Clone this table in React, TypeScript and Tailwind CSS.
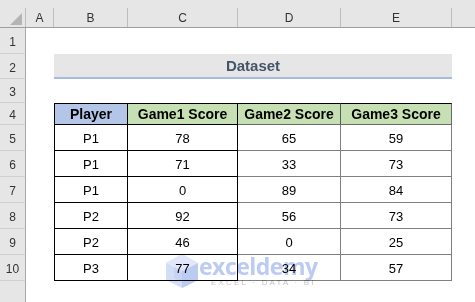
import React from "react";

const rows = [
  ["P1", "78", "65", "59"],
  ["P1", "71", "33", "73"],
  ["P1", "0", "89", "84"],
  ["P2", "92", "56", "73"],
  ["P2", "46", "0", "25"],
  ["P3", "77", "34", "57"],
];

function Label({ n, h }: { n?: string; h: string }) {
  return (
    <div
      className={`${h} w-[26px] shrink-0 bg-[#e6e6e6] border-r border-r-[#a8a8a8] border-b border-b-[#cfcfcf] flex items-center justify-center pt-[3px] text-[12px] text-[#333]`}
    >
      {n}
    </div>
  );
}

function ColHead({ w, t }: { w: string; t?: string }) {
  return (
    <div className={`${w} shrink-0 h-full flex items-end`}>
      <div className="h-[19px] w-full border-r border-r-[#bdbdbd] flex items-center justify-center text-[12px] text-[#333]">
        {t}
      </div>
    </div>
  );
}

export default function App() {
  return (
    <div className="relative w-[475px] h-[302px] overflow-hidden bg-white font-['Liberation_Sans',Arial,sans-serif]">
      {/* column header */}
      <div className="flex h-[28px] bg-[#e6e6e6] border-b border-b-[#9e9e9e]">
        <div className="relative w-[26px] shrink-0 h-full flex items-end">
          <div className="h-[19px] w-full border-r border-r-[#bdbdbd]" />
          <svg className="absolute left-[10px] top-[13px]" width="12" height="12" viewBox="0 0 12 12">
            <polygon points="12,0 12,12 0,12" fill="#b4b4b4" />
          </svg>
        </div>
        <ColHead w="w-[28px]" t="A" />
        <ColHead w="w-[74px]" t="B" />
        <ColHead w="w-[110px]" t="C" />
        <ColHead w="w-[103px]" t="D" />
        <ColHead w="w-[111px]" t="E" />
        <div className="flex-1" />
      </div>

      {/* row 1 */}
      <div className="flex">
        <Label n="1" h="h-[26px]" />
      </div>

      {/* row 2 */}
      <div className="flex">
        <Label n="2" h="h-[25px]" />
        <div className="w-[28px] shrink-0" />
        <div className="w-[398px] shrink-0 h-[25px] bg-[#e7e6e6] border-b-2 border-b-[#a6bae4] flex items-center justify-center pt-[1px] text-[15px] font-bold text-[#44546a]">
          Dataset
        </div>
      </div>

      {/* row 3 */}
      <div className="flex">
        <Label n="3" h="h-[24px]" />
      </div>

      {/* row 4 header */}
      <div className="flex">
        <Label n="4" h="h-[22px]" />
        <div className="w-[28px] shrink-0" />
        <div className="w-[74px] h-[22px] shrink-0 bg-[#b4c6e7] border border-black flex items-center justify-center pt-[1px] text-[14px] font-bold text-black">
          Player
        </div>
        <div className="w-[110px] h-[22px] shrink-0 bg-[#c6e0b4] border-y border-r border-black flex items-center justify-center pt-[1px] text-[14px] font-bold text-black">
          Game1 Score
        </div>
        <div className="w-[103px] h-[22px] shrink-0 bg-[#c6e0b4] border-t border-t-black border-b border-b-[#6a6a6a] border-r border-r-[#5a5a5a] flex items-center justify-center pt-[1px] text-[14px] font-bold text-black">
          Game2 Score
        </div>
        <div className="w-[111px] h-[22px] shrink-0 bg-[#c6e0b4] border-t border-t-black border-b border-b-[#6a6a6a] border-r border-r-[#6a6a6a] flex items-center justify-center pt-[1px] text-[14px] font-bold text-black">
          Game3 Score
        </div>
      </div>

      {/* data rows */}
      {rows.map((r, i) => (
        <div className="flex" key={i}>
          <Label n={String(i + 5)} h="h-[26px]" />
          <div className="w-[28px] shrink-0" />
          <div className="w-[74px] h-[26px] shrink-0 border-l border-r border-b border-black flex items-center justify-center pt-[3px] text-[13px] text-black">
            {r[0]}
          </div>
          <div className="w-[110px] h-[26px] shrink-0 border-r border-b border-black flex items-center justify-center pt-[3px] text-[13px] text-black">
            {r[1]}
          </div>
          <div className="w-[103px] h-[26px] shrink-0 border-r border-b border-[#7f7f7f] flex items-center justify-center pt-[3px] text-[13px] text-black">
            {r[2]}
          </div>
          <div className="w-[111px] h-[26px] shrink-0 border-r border-b border-[#7f7f7f] flex items-center justify-center pt-[3px] text-[13px] text-black">
            {r[3]}
          </div>
        </div>
      ))}

      {/* row 11 */}
      <div className="flex">
        <Label h="h-[30px]" />
      </div>

      {/* watermark */}
      <div className="absolute left-[165px] top-[253px] flex items-start mix-blend-multiply pointer-events-none">
        <svg width="34" height="36" viewBox="0 0 34 36">
          <polygon points="17,1 33,10 33,27 17,35 1,27 1,10" fill="#d3ddf6" />
          <polygon points="17,18 33,10 33,27 17,35" fill="#bccbf0" />
          <polygon points="17,1 33,10 17,18 1,10" fill="#e2e8f9" />
          <polygon points="9,14 17,18 17,29 9,25" fill="#c6d3f3" />
        </svg>
        <div className="flex flex-col items-start">
          <div className="text-[23px] leading-[24px] font-bold tracking-[-0.5px] text-[#bccbf2] font-['Open_Sans',sans-serif] mt-[1px]">
            exceldemy
          </div>
          <div className="text-[8px] leading-[9px] tracking-[2.2px] text-[#c4c4c4] ml-[12px]">
            EXCEL · DATA · BI
          </div>
        </div>
      </div>
    </div>
  );
}
